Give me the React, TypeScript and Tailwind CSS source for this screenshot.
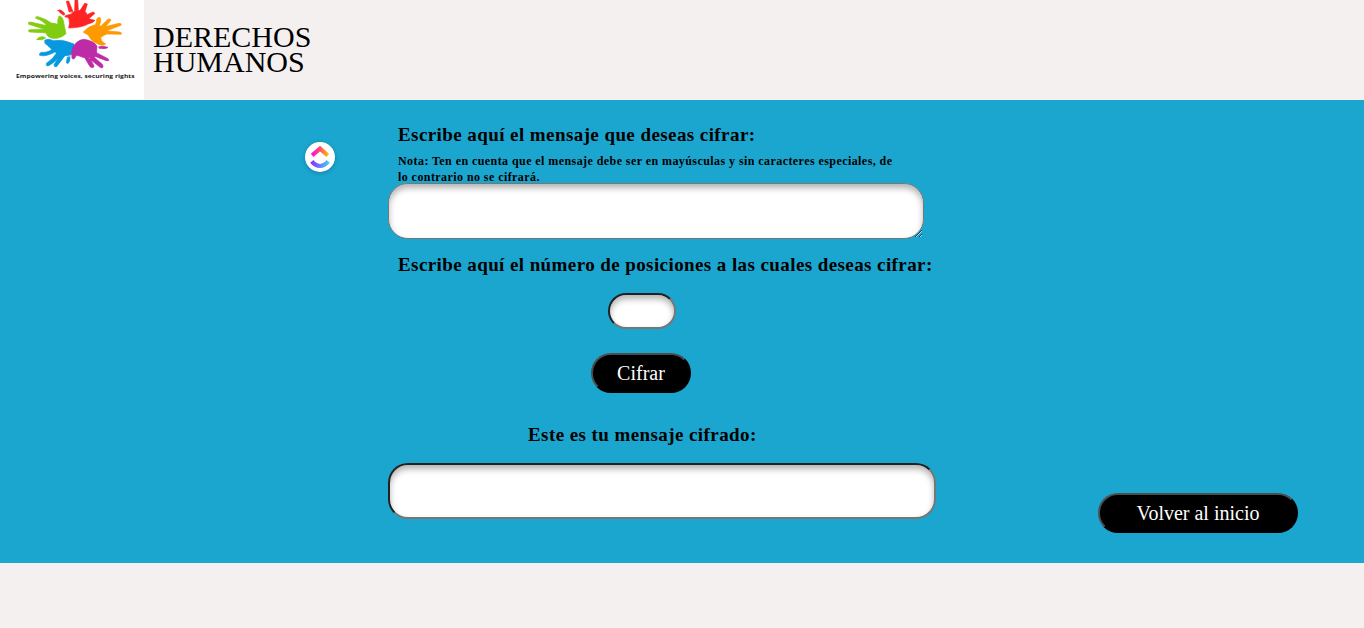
import React from "react";

function HandsLogo() {
  return (
    <svg viewBox="0 0 432 300" className="block h-[100px] w-[144px] shrink-0 bg-white" aria-label="Empowering voices, securing rights">
      <g strokeLinecap="round" strokeLinejoin="round" strokeWidth="2">
        <g fill="#ff2424" stroke="#ff2424">
          <path d="M196 47 L214 42 Q222 30 245 32 L259 38 Q259 50 264 55 Q275 60 285 61 Q280 69 264 72 Q248 83 206 84 Q211 68 207 56 Q204 50 196 51Z" />
          <path d="M207 35 L199 4 L206 3 L219 35Z M224 32 L225 -4 L233 -4 L235 32Z M239 33 L254 10 L262 12 L254 38Z" />
          <path d="M174 31 Q178 27 188 34 Q198 42 192 46 Q181 42 174 31Z M252 48 L279 36 L285 40 L262 60Z" />
        </g>
        <g fill="#80cc10" stroke="#80cc10">
          <path d="M140 73 Q155 65 173 73 Q172 58 177 48 Q187 48 190 62 L198 101 Q181 117 157 115 Q139 111 137 95Z" />
          <path d="M144 82 Q132 62 107 55 Q105 49 114 50 Q139 56 157 72Z M141 90 L86 73 Q83 65 91 66 L145 78Z M141 99 L88 96 Q82 91 88 89 L143 87Z" />
          <path d="M111 119 Q113 110 130 110 L137 114 Q126 122 111 119Z" />
        </g>
        <g fill="#ff9900" stroke="#ff9900">
          <path d="M250 96 Q265 78 286 74 Q291 66 290 57 Q297 48 302 55 Q303 69 298 77 Q319 82 325 98 Q313 106 302 112 Q302 124 317 132 Q307 140 289 130 Q274 125 265 106Z" />
          <path d="M303 78 L325 57 Q335 56 332 62 L313 84Z M311 81 L357 70 Q366 70 363 76 L318 93Z M315 92 L359 96 Q368 98 363 103 L313 102Z" />
        </g>
        <g fill="#0799df" stroke="#0799df">
          <path d="M135 120 Q145 114 161 122 Q187 118 205 126 L222 132 Q225 149 212 165 Q193 170 176 164 L153 146 Q142 135 135 130Z" />
          <path d="M163 142 Q147 160 123 157 Q116 163 119 166 Q139 172 170 153Z M173 154 Q159 178 139 190 Q137 200 146 197 Q169 186 184 160Z M183 159 L162 194 Q161 202 170 200 L197 164Z M202 172 L199 188 Q203 195 209 184 L210 171Z" />
        </g>
        <g fill="#bd2ba6" stroke="#bd2ba6">
          <path d="M218 144 Q229 120 252 118 Q282 122 291 139 L289 166 Q277 177 248 172 Q234 165 228 167 Q223 182 216 175 Q212 160 218 144Z" />
          <path d="M297 140 Q309 137 324 142 Q320 148 298 145Z M278 152 L324 176 Q331 183 319 182 L276 166Z M269 160 L307 193 Q313 206 302 203 L259 169Z M251 168 L270 200 Q281 207 282 198 L265 165Z" />
        </g>
      </g>
      <text x="48" y="233" textLength="356" lengthAdjust="spacingAndGlyphs" fontFamily="'Open Sans', sans-serif" fontWeight="700" fontSize="18" fill="#252525">
        Empowering voices, securing rights
      </text>
    </svg>
  );
}

function AssistantBadge() {
  return (
    <div className="flex h-[30px] w-[30px] items-center justify-center rounded-full bg-white shadow-[0_1px_4px_rgba(0,0,0,0.25)]">
      <svg width="30" height="30" viewBox="0 0 30 30" fill="none">
        <defs>
          <linearGradient id="chevron" x1="6" y1="10" x2="24" y2="10" gradientUnits="userSpaceOnUse">
            <stop stopColor="#ff02f0" />
            <stop offset="0.5" stopColor="#ff4f68" />
            <stop offset="1" stopColor="#ffc800" />
          </linearGradient>
          <linearGradient id="curve" x1="6" y1="20" x2="24" y2="20" gradientUnits="userSpaceOnUse">
            <stop stopColor="#8930fd" />
            <stop offset="1" stopColor="#49ccf9" />
          </linearGradient>
        </defs>
        <path d="M7.2 13.3 15 6.6l7.8 6.7" stroke="url(#chevron)" strokeWidth="4.2" />
        <path d="M6.8 19.4Q10.5 24 15 24t8.2-4.6" stroke="url(#curve)" strokeWidth="4.2" />
      </svg>
    </div>
  );
}

export default function App() {
  return (
    <div className="min-h-[628px] bg-[#f5f0f0] font-['Liberation_Serif',serif] text-black">
      <header className="flex h-[100px]">
        <HandsLogo />
        <h1 className="ml-[9px] mt-6 text-[30px] leading-[25px]">
          DERECHOS
          <br />
          HUMANOS
        </h1>
      </header>
      <main className="flex h-[463px] bg-[#1ba6cf]">
        <div className="ml-[305px] mt-[42px] w-[83px]">
          <AssistantBadge />
        </div>
        <form className="flex w-[548px] flex-col" onSubmit={(e) => e.preventDefault()}>
          <label htmlFor="message" className="ml-[10px] mt-6 h-[22px] whitespace-nowrap text-[19px] font-bold leading-[22px] tracking-[0.42px]">
            Escribe aquí el mensaje que deseas cifrar:
          </label>
          <p className="ml-[10px] mt-[7px] h-[30px] whitespace-nowrap text-[12px] font-bold leading-4 tracking-[0.43px]">
            Nota: Ten en cuenta que el mensaje debe ser en mayúsculas y sin caracteres especiales, de
            <br />
            lo contrario no se cifrará.
          </p>
          <textarea id="message" className="block h-14 w-[536px] resize rounded-[20px] border border-[#767676] bg-white shadow-[inset_0_4px_6px_rgba(0,0,0,0.3)] outline-none" />
          <label htmlFor="positions" className="ml-[10px] mt-[15px] h-[22px] whitespace-nowrap text-[19px] font-bold leading-[22px] tracking-[0.41px]">
            Escribe aquí el número de posiciones a las cuales deseas cifrar:
          </label>
          <input id="positions" className="ml-[220px] mt-[17px] h-9 w-[68px] rounded-[20px] border-2 border-b-[#767676] border-l-[#212121] border-r-[#767676] border-t-[#212121] bg-white shadow-[inset_0_4px_6px_rgba(0,0,0,0.3)] outline-none" />
          <button className="ml-[203px] mt-6 h-10 w-[100px] rounded-[20px] border-2 border-b-black border-l-[#4c4c4c] border-r-black border-t-[#4c4c4c] bg-black text-[20px] leading-[22px] text-white">
            Cifrar
          </button>
          <label htmlFor="result" className="ml-[140px] mt-[31px] h-[22px] whitespace-nowrap text-[19px] font-bold leading-[22px] tracking-[0.42px]">
            Este es tu mensaje cifrado:
          </label>
          <input id="result" readOnly className="mt-[17px] h-14 w-[548px] rounded-[20px] border-2 border-b-[#767676] border-l-[#212121] border-r-[#767676] border-t-[#212121] bg-white shadow-[inset_0_4px_6px_rgba(0,0,0,0.3)] outline-none" />
        </form>
        <button className="mb-[30px] ml-[162px] h-10 w-[200px] self-end rounded-[20px] border-2 border-b-black border-l-[#4c4c4c] border-r-black border-t-[#4c4c4c] bg-black text-[20px] leading-[22px] text-white">
          Volver al inicio
        </button>
      </main>
    </div>
  );
}
